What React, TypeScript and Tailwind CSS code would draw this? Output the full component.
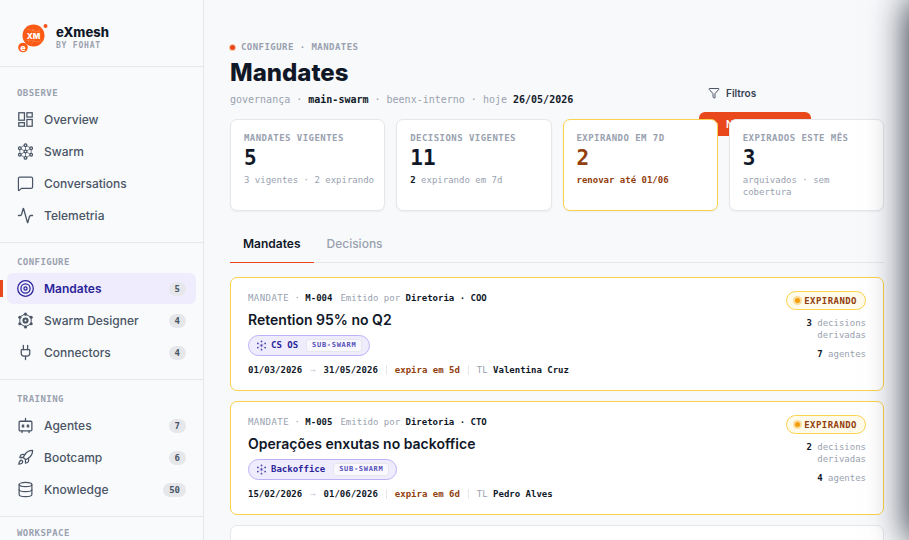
import { useState } from 'react';
import type { ReactNode } from 'react';
import { Activity, Database, Funnel, MessageSquare, Plug, Plus, Rocket } from 'lucide-react';

type IconProps = { size?: number };

const svgProps = (size: number) => ({
  width: size,
  height: size,
  viewBox: '0 0 24 24',
  fill: 'none',
  stroke: 'currentColor',
  strokeWidth: 1.8,
  strokeLinecap: 'round' as const,
  strokeLinejoin: 'round' as const,
  'aria-hidden': true,
});

const HEX = [
  [12, 3],
  [20, 7.5],
  [20, 16.5],
  [12, 21],
  [4, 16.5],
  [4, 7.5],
];

function OverviewIcon({ size = 17 }: IconProps) {
  return (
    <svg {...svgProps(size)} strokeLinejoin="miter">
      <rect x="2.5" y="2.5" width="8" height="10.5" />
      <rect x="14" y="2.5" width="7.5" height="6" />
      <rect x="14" y="12" width="7.5" height="9.5" />
      <rect x="2.5" y="16.5" width="8" height="5" />
    </svg>
  );
}

function SwarmIcon({ size = 17 }: IconProps) {
  return (
    <svg {...svgProps(size)}>
      <path d="M12 3l8 4.5v9L12 21l-8-4.5v-9z" strokeWidth="1" />
      <path d="M12 3v18M4 7.5l16 9M20 7.5l-16 9" strokeWidth="1" />
      {HEX.map(([x, y]) => (
        <circle key={`${x}-${y}`} cx={x} cy={y} r="1.9" fill="#f9fafb" />
      ))}
      <circle cx="12" cy="12" r="2" fill="#f9fafb" />
    </svg>
  );
}

function DesignerIcon({ size = 17 }: IconProps) {
  return (
    <svg {...svgProps(size)}>
      <path d="M12 3l8 4.5v9L12 21l-8-4.5v-9z" strokeWidth="1.4" />
      {HEX.map(([x, y]) => (
        <circle key={`${x}-${y}`} cx={x} cy={y} r="2.2" fill="currentColor" stroke="none" />
      ))}
      <circle cx="12" cy="12" r="2.9" strokeWidth="3" />
    </svg>
  );
}

function TargetIcon({ size = 17 }: IconProps) {
  return (
    <svg {...svgProps(size)}>
      <circle cx="12" cy="12" r="11" />
      <circle cx="12" cy="12" r="6.5" />
      <circle cx="12" cy="12" r="2.2" />
    </svg>
  );
}

function BotIcon({ size = 17 }: IconProps) {
  return (
    <svg {...svgProps(size)}>
      <rect x="3" y="6" width="18" height="13.5" rx="1.5" />
      <path d="M12 2v4M7 19.5V22M17 19.5V22" />
      <rect x="7.5" y="11.5" width="2" height="2.5" strokeWidth="1.6" />
      <rect x="14.5" y="11.5" width="2" height="2.5" strokeWidth="1.6" />
    </svg>
  );
}

function MiniSwarm() {
  return (
    <svg width="11" height="11" viewBox="0 0 24 24" fill="currentColor" opacity="0.8" aria-hidden>
      <path d="M12 3v18M4 7.5l16 9M20 7.5l-16 9" stroke="currentColor" strokeWidth="0.8" opacity="0.4" />
      {HEX.map(([x, y]) => (
        <circle key={`${x}-${y}`} cx={x} cy={y} r="2" />
      ))}
      <circle cx="12" cy="12" r="2.5" />
    </svg>
  );
}

function Logo() {
  return (
    <svg width="30" height="30" viewBox="0 0 30 30" aria-hidden>
      <circle cx="15.5" cy="12.5" r="11" fill="#fb5a16" />
      <path d="M9 6l13 3M7 17l16 2M10 20l5-14 8 12M13 22l9-16" stroke="#ff9a62" strokeWidth="0.4" fill="none" />
      <circle cx="27.5" cy="3" r="2" fill="#f9561b" />
      <circle cx="5" cy="24.5" r="4.8" fill="#fb5a16" />
      <text x="15.5" y="15.5" textAnchor="middle" fontSize="8" fontWeight="800" fill="#fff" fontFamily="Inter, sans-serif">
        XM
      </text>
      <text x="5" y="27.5" textAnchor="middle" fontSize="9" fontWeight="800" fill="#fff" fontFamily="Inter, sans-serif">
        e
      </text>
    </svg>
  );
}

type NavItem = { label: string; icon: ReactNode; count?: number; active?: boolean };

const NAV: { title: string; items: NavItem[] }[] = [
  {
    title: 'Observe',
    items: [
      { label: 'Overview', icon: <OverviewIcon /> },
      { label: 'Swarm', icon: <SwarmIcon /> },
      { label: 'Conversations', icon: <MessageSquare size={17} strokeWidth={1.7} /> },
      { label: 'Telemetria', icon: <Activity size={17} strokeWidth={1.8} /> },
    ],
  },
  {
    title: 'Configure',
    items: [
      { label: 'Mandates', icon: <TargetIcon />, count: 5, active: true },
      { label: 'Swarm Designer', icon: <DesignerIcon />, count: 4 },
      { label: 'Connectors', icon: <Plug size={17} strokeWidth={1.8} />, count: 4 },
    ],
  },
  {
    title: 'Training',
    items: [
      { label: 'Agentes', icon: <BotIcon />, count: 7 },
      { label: 'Bootcamp', icon: <Rocket size={17} strokeWidth={1.8} />, count: 6 },
      { label: 'Knowledge', icon: <Database size={17} strokeWidth={1.7} />, count: 50 },
    ],
  },
];

const STATS = [
  { label: 'Mandates vigentes', value: '5', sub: '3 vigentes · 2 expirando' },
  { label: 'Decisions vigentes', value: '11', strong: '2', sub: 'expirando em 7d' },
  { label: 'Expirando em 7d', value: '2', sub: 'renovar até 01/06', warn: true },
  { label: 'Expirados este mês', value: '3', sub: 'arquivados · sem cobertura' },
];

const MANDATES = [
  {
    id: 'M-004',
    issuer: 'Diretoria · COO',
    title: 'Retention 95% no Q2',
    swarm: 'CS OS',
    from: '01/03/2026',
    to: '31/05/2026',
    expires: 'expira em 5d',
    lead: 'Valentina Cruz',
    decisions: 3,
    agents: 7,
  },
  {
    id: 'M-005',
    issuer: 'Diretoria · CTO',
    title: 'Operações enxutas no backoffice',
    swarm: 'Backoffice',
    from: '15/02/2026',
    to: '01/06/2026',
    expires: 'expira em 6d',
    lead: 'Pedro Alves',
    decisions: 2,
    agents: 4,
  },
];

const TABS = ['Mandates', 'Decisions'];

function SideLabel({ children }: { children: ReactNode }) {
  return (
    <h2 className="px-[17px] font-['DejaVu_Sans_Mono',monospace] text-[9px] leading-[14px] font-bold tracking-wider text-gray-400 uppercase">
      {children}
    </h2>
  );
}

function Sidebar() {
  return (
    <aside className="flex w-[204px] shrink-0 flex-col overflow-hidden border-r border-gray-200 bg-[#f9fafc]">
      <div className="flex h-[67px] shrink-0 items-center gap-2 border-b border-gray-200 pt-2.5 pl-[18px]">
        <Logo />
        <div>
          <div className="text-[13px] leading-4 font-extrabold text-gray-900">eXmesh</div>
          <div className="font-['DejaVu_Sans_Mono',monospace] text-[8px] leading-3 font-bold tracking-widest text-gray-400">
            BY FOHAT
          </div>
        </div>
      </div>
      <nav className="pt-[7px]">
        {NAV.map((section) => (
          <section key={section.title} className="border-b border-gray-200 pt-3 pb-[11px]">
            <SideLabel>{section.title}</SideLabel>
            <ul className="mt-1 flex flex-col gap-px px-[7px]">
              {section.items.map((item) => (
                <li key={item.label} className="relative">
                  {item.active && <span className="absolute top-[7px] -left-[7px] h-[17px] w-[3px] bg-[#e8481c]" />}
                  <a
                    href="#"
                    aria-current={item.active ? 'page' : undefined}
                    className={`flex h-[31px] items-center gap-2.5 rounded-md px-2.5 text-[12px] ${
                      item.active ? 'bg-[#efedfd] font-semibold text-[#2b2499]' : 'font-medium text-gray-600'
                    }`}
                  >
                    {item.icon}
                    <span className="flex-1">{item.label}</span>
                    {item.count !== undefined && (
                      <span className="rounded-full bg-gray-200 px-1.5 font-['DejaVu_Sans_Mono',monospace] text-[9px] leading-[14px] font-bold text-gray-600">
                        {item.count}
                      </span>
                    )}
                  </a>
                </li>
              ))}
            </ul>
          </section>
        ))}
        <section className="pt-[9px]">
          <SideLabel>Workspace</SideLabel>
        </section>
      </nav>
    </aside>
  );
}

function StatCard({ label, value, sub, strong, warn }: (typeof STATS)[number]) {
  return (
    <div
      className={`h-[92px] rounded-[7px] border bg-white pt-3 pr-2 pl-[13px] font-['DejaVu_Sans_Mono',monospace] shadow-xs ${
        warn ? 'border-[#fbd04a]' : 'border-gray-200'
      }`}
    >
      <div className="text-[9px] leading-3 font-bold tracking-wider whitespace-nowrap text-gray-400 uppercase">
        {label}
      </div>
      <div className={`mt-0.5 text-[21px] leading-6 font-bold ${warn ? 'text-[#92400e]' : 'text-gray-900'}`}>{value}</div>
      <div className={`mt-1 text-[9px] leading-3 ${warn ? 'font-bold text-[#92400e]' : 'text-gray-400'}`}>
        {strong && <b className="text-gray-900">{strong} </b>}
        {sub}
      </div>
    </div>
  );
}

function MandateCard({ m }: { m: (typeof MANDATES)[number] }) {
  return (
    <article className="flex justify-between rounded-[7px] border border-[#fbd04a] bg-white px-[17px] py-[13px] font-['DejaVu_Sans_Mono',monospace] text-[9px] text-gray-400">
      <div>
        <div className="flex gap-2 leading-[14px]">
          <span>
            <span className="tracking-wider">MANDATE</span> · <b className="text-gray-900">{m.id}</b>
          </span>
          <span>
            Emitido por <b className="text-gray-900">{m.issuer}</b>
          </span>
        </div>
        <h3 className="my-1 font-[Inter,sans-serif] text-[14px] leading-[22px] font-semibold text-gray-900">{m.title}</h3>
        <div className="flex h-[21px] w-fit items-center gap-1 rounded-full border border-[#b9b3f5] bg-[#efedfd] px-[7px] text-[#2b2499]">
          <MiniSwarm />
          <span className="font-bold">{m.swarm}</span>
          <span className="ml-1 rounded-[3px] border border-gray-200 bg-[#f8f8fe] px-[5px] text-[7px] leading-[11px] font-bold tracking-widest text-[#554db8]">
            SUB-SWARM
          </span>
        </div>
        <div className="mt-[7px] flex items-center gap-2 leading-[14px]">
          <b className="text-gray-900">{m.from}</b>
          <span className="text-gray-300">→</span>
          <b className="text-gray-900">{m.to}</b>
          <span className="h-2.5 w-px bg-gray-200" />
          <b className="text-[#92400e]">{m.expires}</b>
          <span className="h-2.5 w-px bg-gray-200" />
          <span>
            TL <b className="text-gray-900">{m.lead}</b>
          </span>
        </div>
      </div>
      <div className="flex w-20 flex-col items-end text-right leading-3">
        <span className="flex h-[19px] items-center gap-1 rounded-full border border-[#fcd34d] bg-[#fffbeb] px-2 font-bold tracking-wider text-[#92400e]">
          <span className="size-[5px] rounded-full bg-[#f59e0b] ring-2 ring-[#fbdc9a]" />
          EXPIRANDO
        </span>
        <span className="mt-[7px]">
          <b className="text-gray-900">{m.decisions}</b> decisions derivadas
        </span>
        <span className="mt-[7px]">
          <b className="text-gray-900">{m.agents}</b> agentes
        </span>
      </div>
    </article>
  );
}

export default function App() {
  const [tab, setTab] = useState('Mandates');

  return (
    <div className="flex h-screen overflow-hidden bg-[#f8f9fb] font-[Inter,sans-serif]">
      <Sidebar />
      <main className="min-w-0 flex-1 overflow-hidden pt-10 pr-[25px] pl-[26px]">
        <header className="flex items-end justify-between">
          <div className="pb-[11px] font-['DejaVu_Sans_Mono',monospace]">
            <div className="flex items-center gap-1.5 text-[9px] leading-[14px] font-bold tracking-wider text-gray-400">
              <span className="size-[5px] rounded-full bg-[#e8481c] ring-1 ring-[#f8c9a8]" />
              CONFIGURE · MANDATES
            </div>
            <h1 className="mt-1 font-[Inter,sans-serif] text-[24px] leading-[30px] font-extrabold text-gray-900">
              Mandates
            </h1>
            <p className="mt-1 text-[10px] leading-4 text-gray-400">
              governança · <b className="text-gray-900">main-swarm</b> · beenx-interno · hoje{' '}
              <b className="text-gray-900">26/05/2026</b>
            </p>
          </div>
          {/* the primary action slides under the stat cards */}
          <div className="mr-[73px] -mb-[17px] flex flex-col gap-[7px] text-[10px] font-semibold">
            <button className="flex h-6 items-center gap-1.5 px-[9px] text-gray-700">
              <Funnel size={12} strokeWidth={1.8} />
              Filtros
            </button>
            <button className="flex h-6 w-28 items-center gap-1.5 rounded-md bg-[#e8481c] px-[9px] whitespace-nowrap text-white">
              <Plus size={12} />
              Novo mandate
            </button>
          </div>
        </header>

        <div className="relative grid grid-cols-4 gap-[11px]">
          {STATS.map((s) => (
            <StatCard key={s.label} {...s} />
          ))}
        </div>

        <div role="tablist" className="mt-3 flex border-b border-gray-200">
          {TABS.map((t) => (
            <button
              key={t}
              role="tab"
              aria-selected={tab === t}
              onClick={() => setTab(t)}
              className={`relative h-[39px] px-[13px] pt-0.5 text-[12px] ${
                tab === t ? 'font-semibold text-gray-900' : 'font-medium text-gray-400'
              }`}
            >
              {t}
              {tab === t && <span className="absolute inset-x-0 -bottom-px h-px bg-[#e8481c]" />}
            </button>
          ))}
        </div>

        <div className="mt-3.5 flex flex-col gap-2.5">
          {MANDATES.map((m) => (
            <MandateCard key={m.id} m={m} />
          ))}
          <div className="h-28 rounded-[7px] border border-gray-200 bg-white" />
        </div>
      </main>

      <div className="pointer-events-none fixed inset-y-0 left-full w-96 shadow-[0_0_35px_rgba(17,24,39,0.95)]" />
    </div>
  );
}
